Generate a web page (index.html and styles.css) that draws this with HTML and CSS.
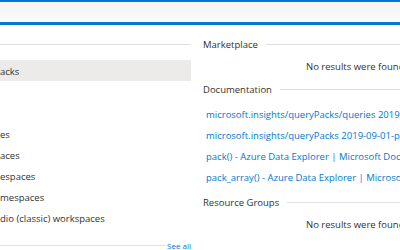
FILE: index.html
```html
<!DOCTYPE html>
<html lang="en">
<head>
<meta charset="utf-8">
<title>Search</title>
<link rel="stylesheet" href="styles.css">
</head>
<body>
<div class="panel">
  <div class="search"></div>
  <div class="cols">
    <div class="left">
      <div class="lhead"><span class="rule"></span></div>
      <ul class="items">
        <li class="item selected">acks</li>
        <li class="item"></li>
        <li class="item"></li>
        <li class="item">es</li>
        <li class="item">aces</li>
        <li class="item">espaces</li>
        <li class="item">mespaces</li>
        <li class="item">dio (classic) workspaces</li>
      </ul>
      <div class="lfoot"><span class="rule"></span><a class="seeall" href="#">See all</a></div>
    </div>
    <div class="right">
      <div class="head"><span class="htext">Marketplace</span><span class="rule"></span></div>
      <div class="none">No results were found.</div>
      <div class="head doc"><span class="htext">Documentation</span><span class="rule"></span></div>
      <ul class="links">
        <li><a href="#">microsoft.insights/queryPacks/queries 2019-09-01-preview</a></li>
        <li><a href="#">microsoft.insights/queryPacks 2019-09-01-preview</a></li>
        <li><a href="#">pack() - Azure Data Explorer | Microsoft Docs</a></li>
        <li><a href="#">pack_array() - Azure Data Explorer | Microsoft Docs</a></li>
      </ul>
      <div class="head rg"><span class="htext">Resource Groups</span><span class="rule"></span></div>
      <div class="none">No results were found.</div>
    </div>
  </div>
</div>
</body>
</html>
```

FILE: styles.css
```css
html, body {
  margin: 0;
  padding: 0;
  background: #ffffff;
}
body {
  font-family: "Open Sans", "Noto Sans", sans-serif;
  font-size: 9.5px;
  color: #323130;
  width: 400px;
  height: 250px;
  overflow: hidden;
}
.panel {
  display: flex;
  flex-direction: column;
  height: 250px;
}
.search {
  height: 20px;
  border-top: 2px solid #0078d4;
  border-bottom: 3px solid #0078d4;
  background: linear-gradient(#f3f3f3, #fbfbfb);
  flex: none;
}
.cols {
  display: grid;
  grid-template-columns: 191px 1fr;
  flex: 1;
  min-height: 0;
}
.left {
  padding-top: 9px;
  display: flex;
  flex-direction: column;
}
.lhead {
  height: 21px;
  display: flex;
  align-items: center;
}
.rule {
  flex: 1;
  height: 1px;
  background: #e1dfdd;
}
.items {
  list-style: none;
  margin: 5px 0 0 0;
  padding: 0;
}
.item {
  height: 21px;
  line-height: 21px;
  white-space: nowrap;
  overflow: hidden;
  padding-top: 1px;
  box-sizing: border-box;
}
.item.selected {
  background: #edebe9;
}
.lfoot {
  margin-top: 7px;
  height: 20px;
  display: flex;
  align-items: center;
}
.seeall {
  color: #0078d4;
  text-decoration: none;
  font-size: 8px;
  margin-left: 1px;
}
.right {
  padding-top: 9px;
  padding-left: 12px;
  overflow: hidden;
}
.head {
  height: 21px;
  display: flex;
  align-items: center;
  white-space: nowrap;
}
.htext {
  margin-right: 8px;
}
.none {
  height: 24px;
  line-height: 24px;
  padding-left: 103px;
  white-space: nowrap;
}
.links {
  list-style: none;
  margin: 4px 0 0 0;
  padding: 0 0 0 3px;
}
.links li {
  height: 21px;
  line-height: 21px;
  white-space: nowrap;
}
.links a {
  color: #0078d4;
  text-decoration: none;
}
.head.rg {
  margin-top: 4px;
}
```
